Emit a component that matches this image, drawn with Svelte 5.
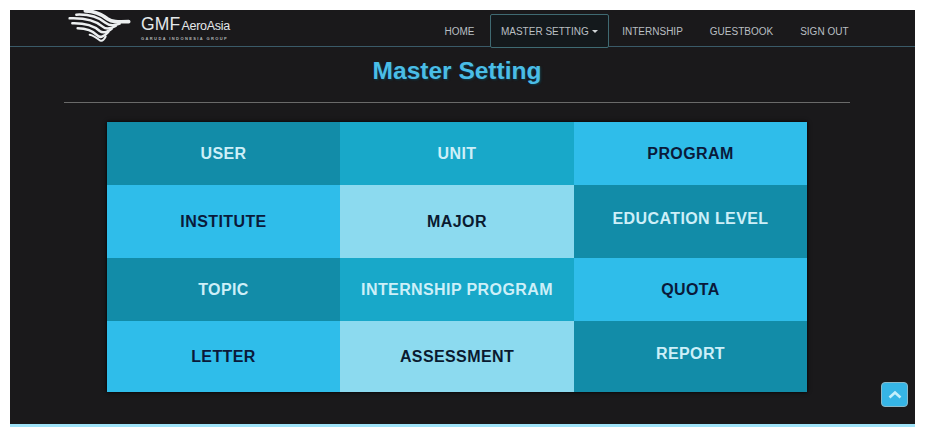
<script>
	const links = ['HOME', 'MASTER SETTING', 'INTERNSHIP', 'GUESTBOOK', 'SIGN OUT'];
	const tiles = [
		{ label: 'USER', tone: 'dark' },
		{ label: 'UNIT', tone: 'mid' },
		{ label: 'PROGRAM', tone: 'sky' },
		{ label: 'INSTITUTE', tone: 'sky' },
		{ label: 'MAJOR', tone: 'pale' },
		{ label: 'EDUCATION LEVEL', tone: 'dark lift' },
		{ label: 'TOPIC', tone: 'dark' },
		{ label: 'INTERNSHIP PROGRAM', tone: 'mid' },
		{ label: 'QUOTA', tone: 'sky' },
		{ label: 'LETTER', tone: 'sky' },
		{ label: 'ASSESSMENT', tone: 'pale' },
		{ label: 'REPORT', tone: 'dark lift' }
	];
</script>

<div class="page">
	<main class="panel">
		<header class="navbar">
			<div class="brand">
				<svg class="wing" width="65" height="33" viewBox="20 6 195 99" fill="none" stroke="#eceff0" stroke-linecap="round">
					<path d="M75 9 C105 9 125 20 142 33 C155 42 170 42 205 41" stroke-width="11" />
					<path d="M48 20 C90 18 115 28 135 44 C148 54 160 54 178 47" stroke-width="7.5" />
					<path d="M28 31 C78 29 105 37 127 56 C138 66 150 63 166 54" stroke-width="7.5" />
					<path d="M36 46 C78 45 100 53 118 69 C128 77 140 73 154 62" stroke-width="7.5" />
					<path d="M52 61 C80 61 98 69 112 83 C120 91 132 85 144 72" stroke-width="7.5" />
					<path d="M88 80 C100 82 110 90 120 98 C126 100 132 94 136 86" stroke-width="6" />
				</svg>
				<div class="brand-text">
					<div class="brand-name"><span class="gmf">GMF</span><span class="aero">AeroAsia</span></div>
					<div class="brand-sub">GARUDA INDONESIA GROUP</div>
				</div>
			</div>
			<nav class="links">
				{#each links as link, i}
					<a href="#top" class:active={i === 1}>
						{link}
						{#if i === 1}<span class="caret"></span>{/if}
					</a>
				{/each}
			</nav>
		</header>

		<div class="content">
			<h1>Master Setting</h1>
			<hr />

			<section class="grid">
				{#each tiles as tile}
					<div class="tile {tile.tone}">{tile.label}</div>
				{/each}
			</section>
		</div>

		<button class="to-top" aria-label="Back to top">
			<svg width="14" height="9" viewBox="0 0 14 9" fill="none" stroke="#c4effc" stroke-width="2.6">
				<path d="M1.5 7.5 L7 2.5 L12.5 7.5" />
			</svg>
		</button>
	</main>
</div>

<style>
	:global(body) {
		background: #fff;
		overflow: hidden;
	}

	.page {
		height: 438px;
		box-sizing: border-box;
		padding: 10px 11px 11px 10px;
		font-family: 'Liberation Sans', Arial, sans-serif;
	}

	.panel {
		position: relative;
		height: 100%;
		box-sizing: border-box;
		background: #1a191b;
		border-bottom: 3px solid #9fe3f8;
	}

	.navbar {
		height: 37px;
		box-sizing: border-box;
		border-bottom: 1px solid #3a5a68;
		display: flex;
		justify-content: space-between;
		align-items: flex-start;
		padding: 0 53px 0 57px;
	}

	.brand {
		display: flex;
		gap: 9px;
	}

	.brand-text {
		padding-top: 5px;
		color: #e4e8ea;
	}

	.brand-name {
		display: flex;
		align-items: baseline;
		line-height: 18px;
	}

	.gmf {
		font-size: 17.5px;
		letter-spacing: 0.2px;
	}

	.aero {
		font-size: 12.5px;
		letter-spacing: -0.3px;
		margin-left: 1px;
	}

	.brand-sub {
		font-size: 4px;
		font-weight: bold;
		letter-spacing: 1.4px;
		color: #b0b4b6;
		margin-top: 1px;
		white-space: nowrap;
	}

	.links {
		display: flex;
		align-items: flex-start;
		padding-top: 4px;
	}

	.links a {
		height: 34px;
		box-sizing: border-box;
		display: flex;
		align-items: center;
		gap: 3px;
		padding: 0 12.5px;
		font-size: 10px;
		color: #b9bfc2;
		text-decoration: none;
		white-space: nowrap;
		border: 1px solid transparent;
	}

	.links a.active {
		background: #14191c;
		border: 1px solid #3f6a72;
		border-radius: 2px;
		padding: 0 10px;
		margin: 0 0 0 2px;
	}

	.caret {
		width: 0;
		height: 0;
		border-left: 3px solid transparent;
		border-right: 3px solid transparent;
		border-top: 3px solid #d0d4d6;
	}

	.content {
		padding-right: 11px;
		display: flex;
		flex-direction: column;
		align-items: center;
	}

	h1 {
		margin: 10px 0 0;
		font-size: 24.5px;
		line-height: 28px;
		font-weight: bold;
		color: #4abde6;
		text-shadow: 1px 1px 2px #0d3a4a;
	}

	hr {
		width: 786px;
		margin: 17px 0 0;
		border: 0;
		border-top: 1px solid #6a6a6a;
	}

	.grid {
		width: 700px;
		margin-top: 19px;
		display: grid;
		grid-template-columns: 233px 234px 233px;
		grid-template-rows: 63px 73px 63px 71px;
		font-size: 16px;
		font-weight: bold;
		letter-spacing: 0.4px;
		box-shadow: 0 0 4px #000;
	}

	.tile {
		display: flex;
		align-items: center;
		justify-content: center;
		padding-top: 1px;
	}

	.lift {
		padding-top: 0;
		padding-bottom: 6px;
	}

	.dark {
		background: #128ca8;
		color: #cdeff8;
	}

	.mid {
		background: #18a8c9;
		color: #cdeff8;
	}

	.sky {
		background: #2fbdea;
		color: #0a1a3a;
	}

	.pale {
		background: #8cdaef;
		color: #0a1a30;
	}

	.to-top {
		position: absolute;
		right: 7px;
		bottom: 17px;
		width: 27px;
		height: 25px;
		padding: 0;
		border: 1px solid #8ab8c8;
		border-radius: 4px;
		background: #36b5e6;
		display: flex;
		align-items: center;
		justify-content: center;
	}
</style>
